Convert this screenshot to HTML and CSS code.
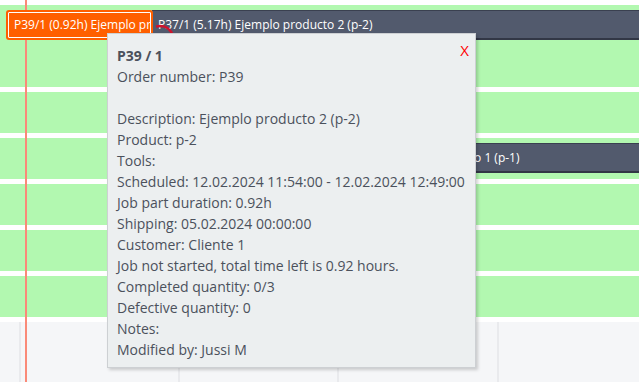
FILE: index.html
```html
<!DOCTYPE html>
<html>
<head>
<meta charset="utf-8">
<link rel="stylesheet" href="styles.css">
</head>
<body>
<div class="gantt">
  <div class="rows">
    <div class="row row-double"></div>
    <div class="row"></div>
    <div class="row"></div>
    <div class="row"></div>
    <div class="row"></div>
    <div class="row"></div>
  </div>
  <div class="footer">
    <div class="col"></div>
    <div class="col"></div>
    <div class="col"></div>
    <div class="col"></div>
    <div class="col"></div>
  </div>

  <div class="now-line"></div>

  <div class="bar bar-dark bar-p37">P37/1 (5.17h) Ejemplo producto 2 (p-2)</div>
  <div class="bar bar-dark bar-p38">P38/1 (2.00h) Ejemplo producto 1 (p-1)</div>
  <div class="bar bar-orange"><span class="bar-inner">P39/1 (0.92h) Ejemplo producto 2 (p-2)</span></div>

  <svg class="link" width="40" height="40" viewBox="0 0 40 40">
    <path d="M3 26.5 Q 16 24 20 36" fill="none" stroke="#d0122c" stroke-width="2.4"/>
  </svg>

  <div class="tooltip">
    <span class="close">X</span>
    <div class="tt-title">P39 / 1</div>
    <div>Order number: P39</div>
    <div>&nbsp;</div>
    <div>Description: Ejemplo producto 2 (p-2)</div>
    <div>Product: p-2</div>
    <div>Tools:</div>
    <div>Scheduled: 12.02.2024 11:54:00 - 12.02.2024 12:49:00</div>
    <div>Job part duration: 0.92h</div>
    <div>Shipping: 05.02.2024 00:00:00</div>
    <div>Customer: Cliente 1</div>
    <div>Job not started, total time left is 0.92 hours.</div>
    <div>Completed quantity: 0/3</div>
    <div>Defective quantity: 0</div>
    <div>Notes:</div>
    <div>Modified by: Jussi M</div>
  </div>
</div>
</body>
</html>
```

FILE: styles.css
```css
html, body {
  margin: 0;
  padding: 0;
  background: #ffffff;
  font-family: "Open Sans", "Noto Sans", sans-serif;
}

.gantt {
  position: relative;
  width: 639px;
  height: 382px;
  overflow: hidden;
}

.rows {
  display: flex;
  flex-direction: column;
  gap: 5px;
  padding-top: 5px;
  padding-bottom: 5px;
}

.row {
  height: 41px;
  background: #b2f8b0;
}

.row-double {
  height: 82px;
}

.footer {
  display: grid;
  grid-template-columns: 21px 159px 159px 160px 1fr;
  height: 60px;
  background: #f5f6f8;
}

.col {
  border-right: 2px solid #e9eaed;
}

.col:last-child {
  border-right: none;
}

.now-line {
  position: absolute;
  left: 25px;
  top: 0;
  width: 2px;
  height: 382px;
  background: #fa8a78;
}

.bar {
  position: absolute;
  height: 30px;
  box-sizing: border-box;
  font-size: 12px;
  line-height: 28px;
  color: #ffffff;
  white-space: nowrap;
  overflow: hidden;
}

.bar-dark {
  background: #525a6d;
  border-top: 1px solid #3a4050;
  border-bottom: 2px solid #323746;
  padding-left: 6px;
  line-height: 27px;
}

.bar-p37 {
  left: 152px;
  top: 10px;
  width: 500px;
}

.bar-p38 {
  left: 299px;
  top: 143px;
  width: 360px;
}

.bar-orange {
  left: 6px;
  top: 10px;
  width: 147px;
  background: #ff5f00;
  border-radius: 3px;
  padding: 2px;
}

.bar-inner {
  display: block;
  height: 26px;
  box-sizing: border-box;
  border: 1px solid #ffffff;
  border-radius: 1px;
  padding-left: 5px;
  line-height: 24px;
  overflow: hidden;
}

.link {
  position: absolute;
  left: 153px;
  top: 0;
}

.tooltip {
  position: absolute;
  left: 107px;
  top: 33px;
  width: 369px;
  height: 335px;
  box-sizing: border-box;
  background: #eceff0;
  border: 1px solid #cdd0d3;
  box-shadow: 2px 2px 3px rgba(0, 0, 0, 0.18);
  padding: 11px 9px 10px;
  font-size: 14px;
  line-height: 21px;
  color: #4b515c;
  white-space: nowrap;
}

.tt-title {
  font-weight: 700;
}

.close {
  position: absolute;
  right: 6px;
  top: 6px;
  color: #ff0000;
  font-size: 15px;
  line-height: 20px;
}
```
